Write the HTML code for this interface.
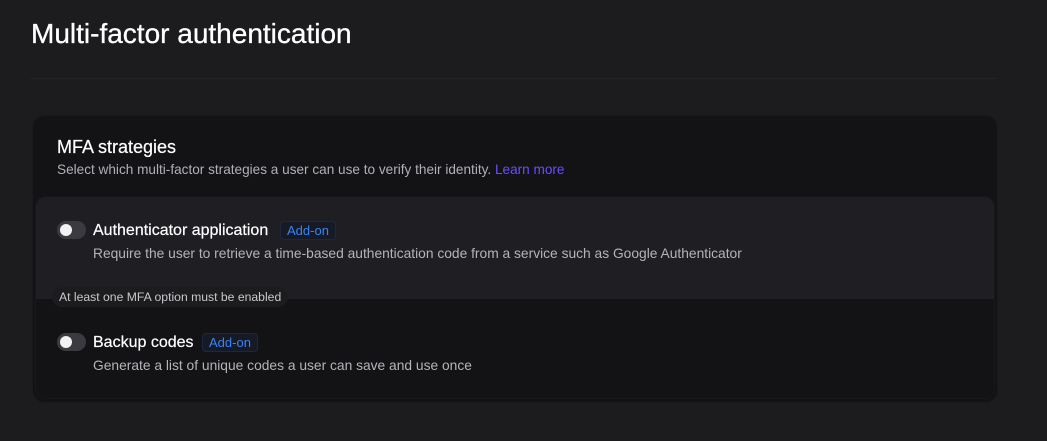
<!DOCTYPE html>
<html><head><style>
*{margin:0;padding:0;box-sizing:border-box}
body{width:1047px;height:441px;background:#1c1c1f;font-family:"Liberation Sans",sans-serif;color:#fff;position:relative;overflow:hidden}
.abs{position:absolute;white-space:nowrap}
h1{position:absolute;left:31px;top:18px;font-size:28px;font-weight:400;-webkit-text-stroke:0.3px #fff}
.div{position:absolute;left:30px;top:78px;width:967px;height:1px;background:#232327}
.card{position:absolute;left:32px;top:115px;width:966px;height:288px;background:#131316;border-radius:13px;border:1px solid #19191c}
.inner{position:absolute;left:35px;top:196px;width:960px;height:203px;border-radius:11px;overflow:hidden;background:#131316;border:1px solid #18181b}
.top{position:absolute;left:0;top:0;width:100%;height:102px;background:#1f1f23}
.tog{position:absolute;width:29px;height:18px;border-radius:9px;background:#3a3a40}
.tog::after{content:"";position:absolute;left:3px;top:3px;width:12px;height:12px;border-radius:50%;background:#f2f2f2}
.lbl{font-size:16px;color:#fff;-webkit-text-stroke:0.2px #fff}
.badge{position:absolute;font-size:13px;color:#3b82f6;border:1px solid #1e2740;border-radius:4px;padding:1px 6px;background:#161a26}
.desc{font-size:13.8px;color:#b3b3ba}
.tip{position:absolute;left:52px;top:287px;height:20px;padding:0 7px;border-radius:10px;background:#1c1c1f;font-size:12.2px;color:#c8c8cc;line-height:20px}
</style></head><body>
<h1>Multi-factor authentication</h1>
<div class="div"></div>
<div class="card"></div>
<div class="abs" style="left:57px;top:137px;font-size:18px;-webkit-text-stroke:0.2px #fff">MFA strategies</div>
<div class="abs desc" style="left:57px;top:162px;color:#b0b0b8;font-size:13.6px">Select which multi-factor strategies a user can use to verify their identity. <span style="color:#6c4cff">Learn more</span></div>
<div class="inner"><div class="top"></div></div>
<div class="tog" style="left:57px;top:221px"></div>
<div class="abs lbl" style="left:93px;top:222px">Authenticator application</div>
<div class="badge" style="left:280px;top:221px">Add-on</div>
<div class="abs desc" style="left:93px;top:246px">Require the user to retrieve a time-based authentication code from a service such as Google Authenticator</div>
<div class="tip">At least one MFA option must be enabled</div>
<div class="tog" style="left:57px;top:333px"></div>
<div class="abs lbl" style="left:93px;top:334px">Backup codes</div>
<div class="badge" style="left:202px;top:333px">Add-on</div>
<div class="abs desc" style="left:93px;top:358px">Generate a list of unique codes a user can save and use once</div>
</body></html>
